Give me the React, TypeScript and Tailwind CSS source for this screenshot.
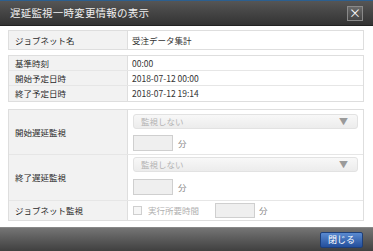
import React from 'react';

const font = { fontFamily: '"Noto Sans CJK JP", "Noto Sans", sans-serif' };

const Label = ({ children }: { children: React.ReactNode }) => (
  <div className="flex items-center bg-[#f2f2f2] border-r border-[#dedede] pl-[6px] text-[8.5px] text-[#2a2a2a]">
    {children}
  </div>
);

const Value = ({ children }: { children: React.ReactNode }) => (
  <div className="flex items-center pl-[4px] text-[8.5px] text-[#333]">{children}</div>
);

const SelectBox = () => (
  <div className="flex items-center justify-between h-[15px] w-[225px] rounded-[3px] border border-[#e2e2e2] bg-gradient-to-b from-[#f8f8f8] to-[#ececec] pl-[7px] pr-[9px]">
    <span className="text-[8.5px] text-[#b4b4b4]">監視しない</span>
    <span className="text-[9px] text-[#9a9a9a] leading-none">▼</span>
  </div>
);

const MinuteInput = () => <div className="h-[16px] w-[40px] border border-[#cfcfcf] bg-[#efefef]" />;

export default function App() {
  return (
    <div className="w-[373px] h-[251px] bg-white flex flex-col overflow-hidden" style={font}>
      {/* タイトルバー */}
      <div className="h-[26px] shrink-0 flex items-center justify-between border-t border-[#2c5f8f] bg-gradient-to-b from-[#565656] to-[#333333] border-b border-b-[#222] pl-[10px] pr-[10px]">
        <span className="text-[10.5px] text-[#f0f0f0] tracking-[0.2px]">遅延監視一時変更情報の表示</span>
        <div className="w-[16px] h-[15px] flex items-center justify-center border border-[#8a8a8a] bg-gradient-to-b from-[#6a6a6a] to-[#444] text-white text-[12px] leading-none">
          ×
        </div>
      </div>

      <div className="flex-1 px-[8px] pt-[4px] pr-[9px]">
        {/* ジョブネット名 */}
        <div className="grid grid-cols-[119px_1fr] h-[20px] border border-[#dedede]">
          <Label>ジョブネット名</Label>
          <Value>受注データ集計</Value>
        </div>

        {/* 基準時刻など */}
        <div className="mt-[5px] border border-[#dedede]">
          <div className="grid grid-cols-[119px_1fr] h-[15px] border-b border-[#e6e6e6]">
            <Label>基準時刻</Label>
            <Value>00:00</Value>
          </div>
          <div className="grid grid-cols-[119px_1fr] h-[15px] border-b border-[#e6e6e6]">
            <Label>開始予定日時</Label>
            <Value>2018-07-12 00:00</Value>
          </div>
          <div className="grid grid-cols-[119px_1fr] h-[15px]">
            <Label>終了予定日時</Label>
            <Value>2018-07-12 19:14</Value>
          </div>
        </div>

        {/* 監視設定 */}
        <div className="mt-[7px] border border-[#dedede]">
          <div className="grid grid-cols-[119px_1fr] h-[45px] border-b border-[#e6e6e6]">
            <Label>開始遅延監視</Label>
            <div className="flex flex-col pl-[5px] pt-[4px] gap-[6px]">
              <SelectBox />
              <div className="flex items-center gap-[5px]">
                <MinuteInput />
                <span className="text-[8.5px] text-[#888]">分</span>
              </div>
            </div>
          </div>
          <div className="grid grid-cols-[119px_1fr] h-[46px] border-b border-[#e6e6e6]">
            <Label>終了遅延監視</Label>
            <div className="flex flex-col pl-[5px] pt-[2px] gap-[7px]">
              <SelectBox />
              <div className="flex items-center gap-[5px]">
                <MinuteInput />
                <span className="text-[8.5px] text-[#888]">分</span>
              </div>
            </div>
          </div>
          <div className="grid grid-cols-[119px_1fr] h-[19px]">
            <Label>ジョブネット監視</Label>
            <div className="flex items-center pl-[5px]">
              <div className="w-[9px] h-[9px] border border-[#cfcfcf] bg-[#f6f6f6]" />
              <span className="ml-[6px] text-[8.5px] text-[#b0b0b0]">実行所要時間</span>
              <div className="ml-[16px] h-[15px] w-[40px] border border-[#cfcfcf] bg-[#efefef]" />
              <span className="ml-[4px] text-[8.5px] text-[#888]">分</span>
            </div>
          </div>
        </div>
      </div>

      {/* フッター */}
      <div className="h-[24px] shrink-0 flex items-center justify-end pr-[10px] bg-gradient-to-b from-[#757575] to-[#404040] border-t border-[#888]">
        <button className="h-[16px] w-[43px] flex items-center justify-center rounded-[2px] border border-[#1d3f7a] bg-gradient-to-b from-[#5a8ad0] to-[#244f9c] text-white text-[9px]">
          閉じる
        </button>
      </div>
    </div>
  );
}
